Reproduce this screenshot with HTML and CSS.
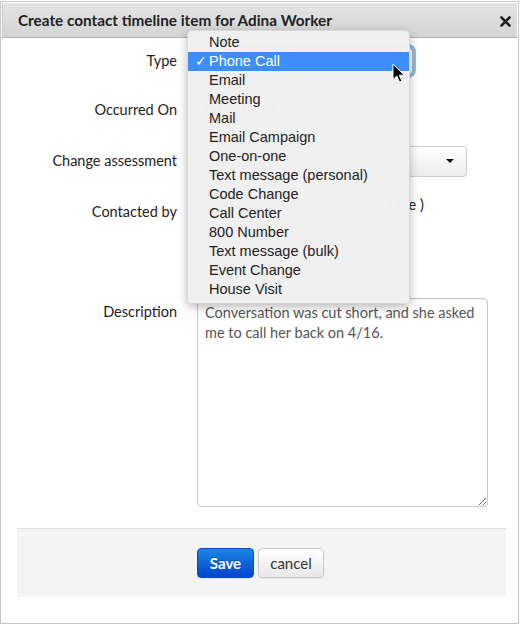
FILE: index.html
```html
<!DOCTYPE html>
<html lang="en">
<head>
<meta charset="utf-8">
<title>Create contact timeline item</title>
<link rel="stylesheet" href="styles.css">
</head>
<body>
<div class="modal">
  <div class="modal-header">
    <h3 class="title">Create contact timeline item for Adina Worker</h3>
    <span class="close"><svg width="11" height="11" viewBox="0 0 11 11"><path d="M1.5 1.5 L9.5 9.5 M9.5 1.5 L1.5 9.5" stroke="#222" stroke-width="2.6" stroke-linecap="round"/></svg></span>
  </div>
  <div class="modal-body">
    <form class="form">
      <div class="row row-type">
        <label class="label">Type</label>
        <div class="control">
          <div class="select-focus">
            <span class="select-value">Phone Call</span>
            <svg class="stepper" width="6" height="12" viewBox="0 0 6 12"><path d="M0 4.5 L3 1 L6 4.5 Z M0 7.5 L3 11 L6 7.5 Z" fill="#777"/></svg>
          </div>
        </div>
      </div>
      <div class="row row-date">
        <label class="label">Occurred On</label>
        <div class="control"><div class="input date">04/14/2016</div></div>
      </div>
      <div class="row row-assess">
        <label class="label">Change assessment</label>
        <div class="control">
          <div class="btn-select"><span class="btn-select-text">No change</span><span class="caret"></span></div>
        </div>
      </div>
      <div class="row row-contact">
        <label class="label">Contacted by</label>
        <div class="control">
          <div class="contact-line"><div class="input user">Adina Worker</div><span class="me">( me )</span></div>
        </div>
      </div>
      <div class="row row-desc">
        <label class="label">Description</label>
        <div class="control">
          <textarea class="textarea">Conversation was cut short, and she asked me to call her back on 4/16.</textarea>
        </div>
      </div>
    </form>
    <div class="footer">
      <button class="btn btn-primary" type="button">Save</button>
      <button class="btn" type="button">cancel</button>
    </div>
  </div>

  <ul class="menu">
    <li class="menu-item">Note</li>
    <li class="menu-item selected"><span class="check">✓</span>Phone Call</li>
    <li class="menu-item">Email</li>
    <li class="menu-item">Meeting</li>
    <li class="menu-item">Mail</li>
    <li class="menu-item">Email Campaign</li>
    <li class="menu-item">One-on-one</li>
    <li class="menu-item">Text message (personal)</li>
    <li class="menu-item">Code Change</li>
    <li class="menu-item">Call Center</li>
    <li class="menu-item">800 Number</li>
    <li class="menu-item">Text message (bulk)</li>
    <li class="menu-item">Event Change</li>
    <li class="menu-item">House Visit</li>
  </ul>
  <svg class="cursor" width="14" height="21" viewBox="0 0 14 21"><path d="M1 1 L1 16.5 L4.8 13 L7.6 19.2 L10 18.1 L7.3 12.2 L12.3 12.2 Z" fill="#000" stroke="#fff" stroke-width="1" stroke-linejoin="round"/></svg>
</div>
</body>
</html>
```

FILE: styles.css
```css
html, body {
  margin: 0;
  padding: 0;
  background: #fff;
}
body {
  font-family: Lato, "Open Sans", sans-serif;
  font-size: 14.5px;
  color: #333;
}
.modal {
  position: relative;
  width: 519px;
  height: 623px;
  margin-top: 1px;
  box-sizing: border-box;
  border: 1px solid #c6c6c6;
  padding: 1px;
  overflow: hidden;
}
.modal-header {
  height: 35px;
  box-sizing: border-box;
  background: linear-gradient(#e4e4e4, #d4d4d4);
  border-bottom: 1px solid #b4b4b4;
  border-left: 1px solid #c8c8c8;
  display: flex;
  align-items: center;
  justify-content: space-between;
  padding: 0 6px 0 15px;
}
.title {
  margin: 0;
  font-size: 15.3px;
  font-weight: 700;
  color: #222;
}
.close {
  display: flex;
  margin-top: 3px;
}
.modal-body {
  padding: 0 11px 0 15px;
}
.form {
  margin: 0;
}
.row {
  display: flex;
  gap: 20px;
}
.label {
  width: 160px;
  flex: none;
  text-align: right;
  line-height: 20px;
  color: #1e1e1e;
}
.control {
  flex: 1;
  display: flex;
}
.row-type {
  margin-top: 7px;
  height: 32px;
  align-items: center;
}
.row-date {
  margin-top: 17px;
  height: 32px;
  align-items: center;
}
.row-assess {
  margin-top: 19px;
  height: 32px;
  align-items: center;
}
.row-contact {
  margin-top: 18px;
  height: 85px;
  align-items: flex-start;
}
.row-contact .label {
  padding-top: 7px;
}
.row-desc {
  margin-top: 18px;
  align-items: flex-start;
}
.row-desc .label {
  padding-top: 4px;
}
.select-focus {
  width: 216px;
  height: 28px;
  box-sizing: border-box;
  border: 1px solid #a9a9a9;
  border-radius: 5px;
  box-shadow: 0 0 0 3px #8cb8f3;
  background: #fff;
  display: flex;
  align-items: center;
  justify-content: space-between;
  padding: 0 4px 0 8px;
  font-family: "Liberation Sans", Arial, sans-serif;
  font-size: 13px;
}
.stepper {
  display: block;
}
.input {
  height: 30px;
  box-sizing: border-box;
  border: 1px solid #ccc;
  border-radius: 4px;
  padding: 0 8px;
  line-height: 28px;
  color: #555;
}
.date {
  width: 150px;
}
.btn-select {
  width: 270px;
  height: 31px;
  box-sizing: border-box;
  border: 1px solid #ccc;
  border-radius: 4px;
  background: linear-gradient(#ffffff, #ececec);
  display: flex;
  align-items: center;
  justify-content: space-between;
  padding: 0 12px 0 10px;
  color: #333;
}
.caret {
  width: 0;
  height: 0;
  border-left: 4px solid transparent;
  border-right: 4px solid transparent;
  border-top: 4px solid #111;
}
.contact-line {
  display: flex;
  align-items: flex-start;
  gap: 8px;
}
.user {
  width: 184px;
}
.me {
  line-height: 20px;
  color: #222;
}
.textarea {
  display: block;
  width: 291px;
  height: 209px;
  box-sizing: border-box;
  margin: 0;
  border: 1px solid #c8c8c8;
  border-radius: 4px;
  padding: 4px 7px;
  font-family: Lato, "Open Sans", sans-serif;
  font-size: 14.5px;
  line-height: 20px;
  color: #555;
  resize: vertical;
  box-shadow: inset 0 1px 1px rgba(0, 0, 0, 0.06);
}
.footer {
  margin-top: 21px;
  height: 69px;
  box-sizing: border-box;
  background: #f4f4f4;
  border-top: 1px solid #dedede;
  padding: 19px 0 0 180px;
  display: flex;
  align-items: flex-start;
  gap: 4px;
}
.btn {
  height: 30px;
  box-sizing: border-box;
  padding: 0 8px;
  border: 1px solid #c8c8c8;
  border-radius: 4px;
  background: linear-gradient(#ffffff, #e8e8e8);
  font-family: Lato, "Open Sans", sans-serif;
  font-size: 15px;
  color: #333;
  box-shadow: 0 1px 1px rgba(0, 0, 0, 0.08);
}
.btn-primary {
  width: 57px;
  border-color: #0a4fc9;
  background: linear-gradient(#1c86e2, #0043cf);
  color: #fff;
  font-weight: 700;
  text-shadow: 0 -1px 0 rgba(0, 0, 0, 0.2);
}
.btn + .btn {
  width: 66px;
}
.menu {
  position: absolute;
  left: 186px;
  top: 28px;
  width: 221px;
  margin: 0;
  padding: 2px 0 4px;
  list-style: none;
  background: rgba(240, 240, 240, 0.98);
  border: 1px solid rgba(0, 0, 0, 0.1);
  border-radius: 5px;
  box-shadow: 0 3px 10px rgba(0, 0, 0, 0.28);
  font-family: "Liberation Sans", Arial, sans-serif;
  font-size: 14.5px;
  color: #222;
}
.menu-item {
  position: relative;
  height: 19px;
  line-height: 19px;
  padding-left: 21px;
}
.menu-item.selected {
  background: #3d8ef7;
  color: #fff;
}
.check {
  position: absolute;
  left: 7px;
  top: 0;
  font-size: 14px;
  font-weight: 400;
}
.cursor {
  position: absolute;
  left: 391px;
  top: 61px;
}
```
